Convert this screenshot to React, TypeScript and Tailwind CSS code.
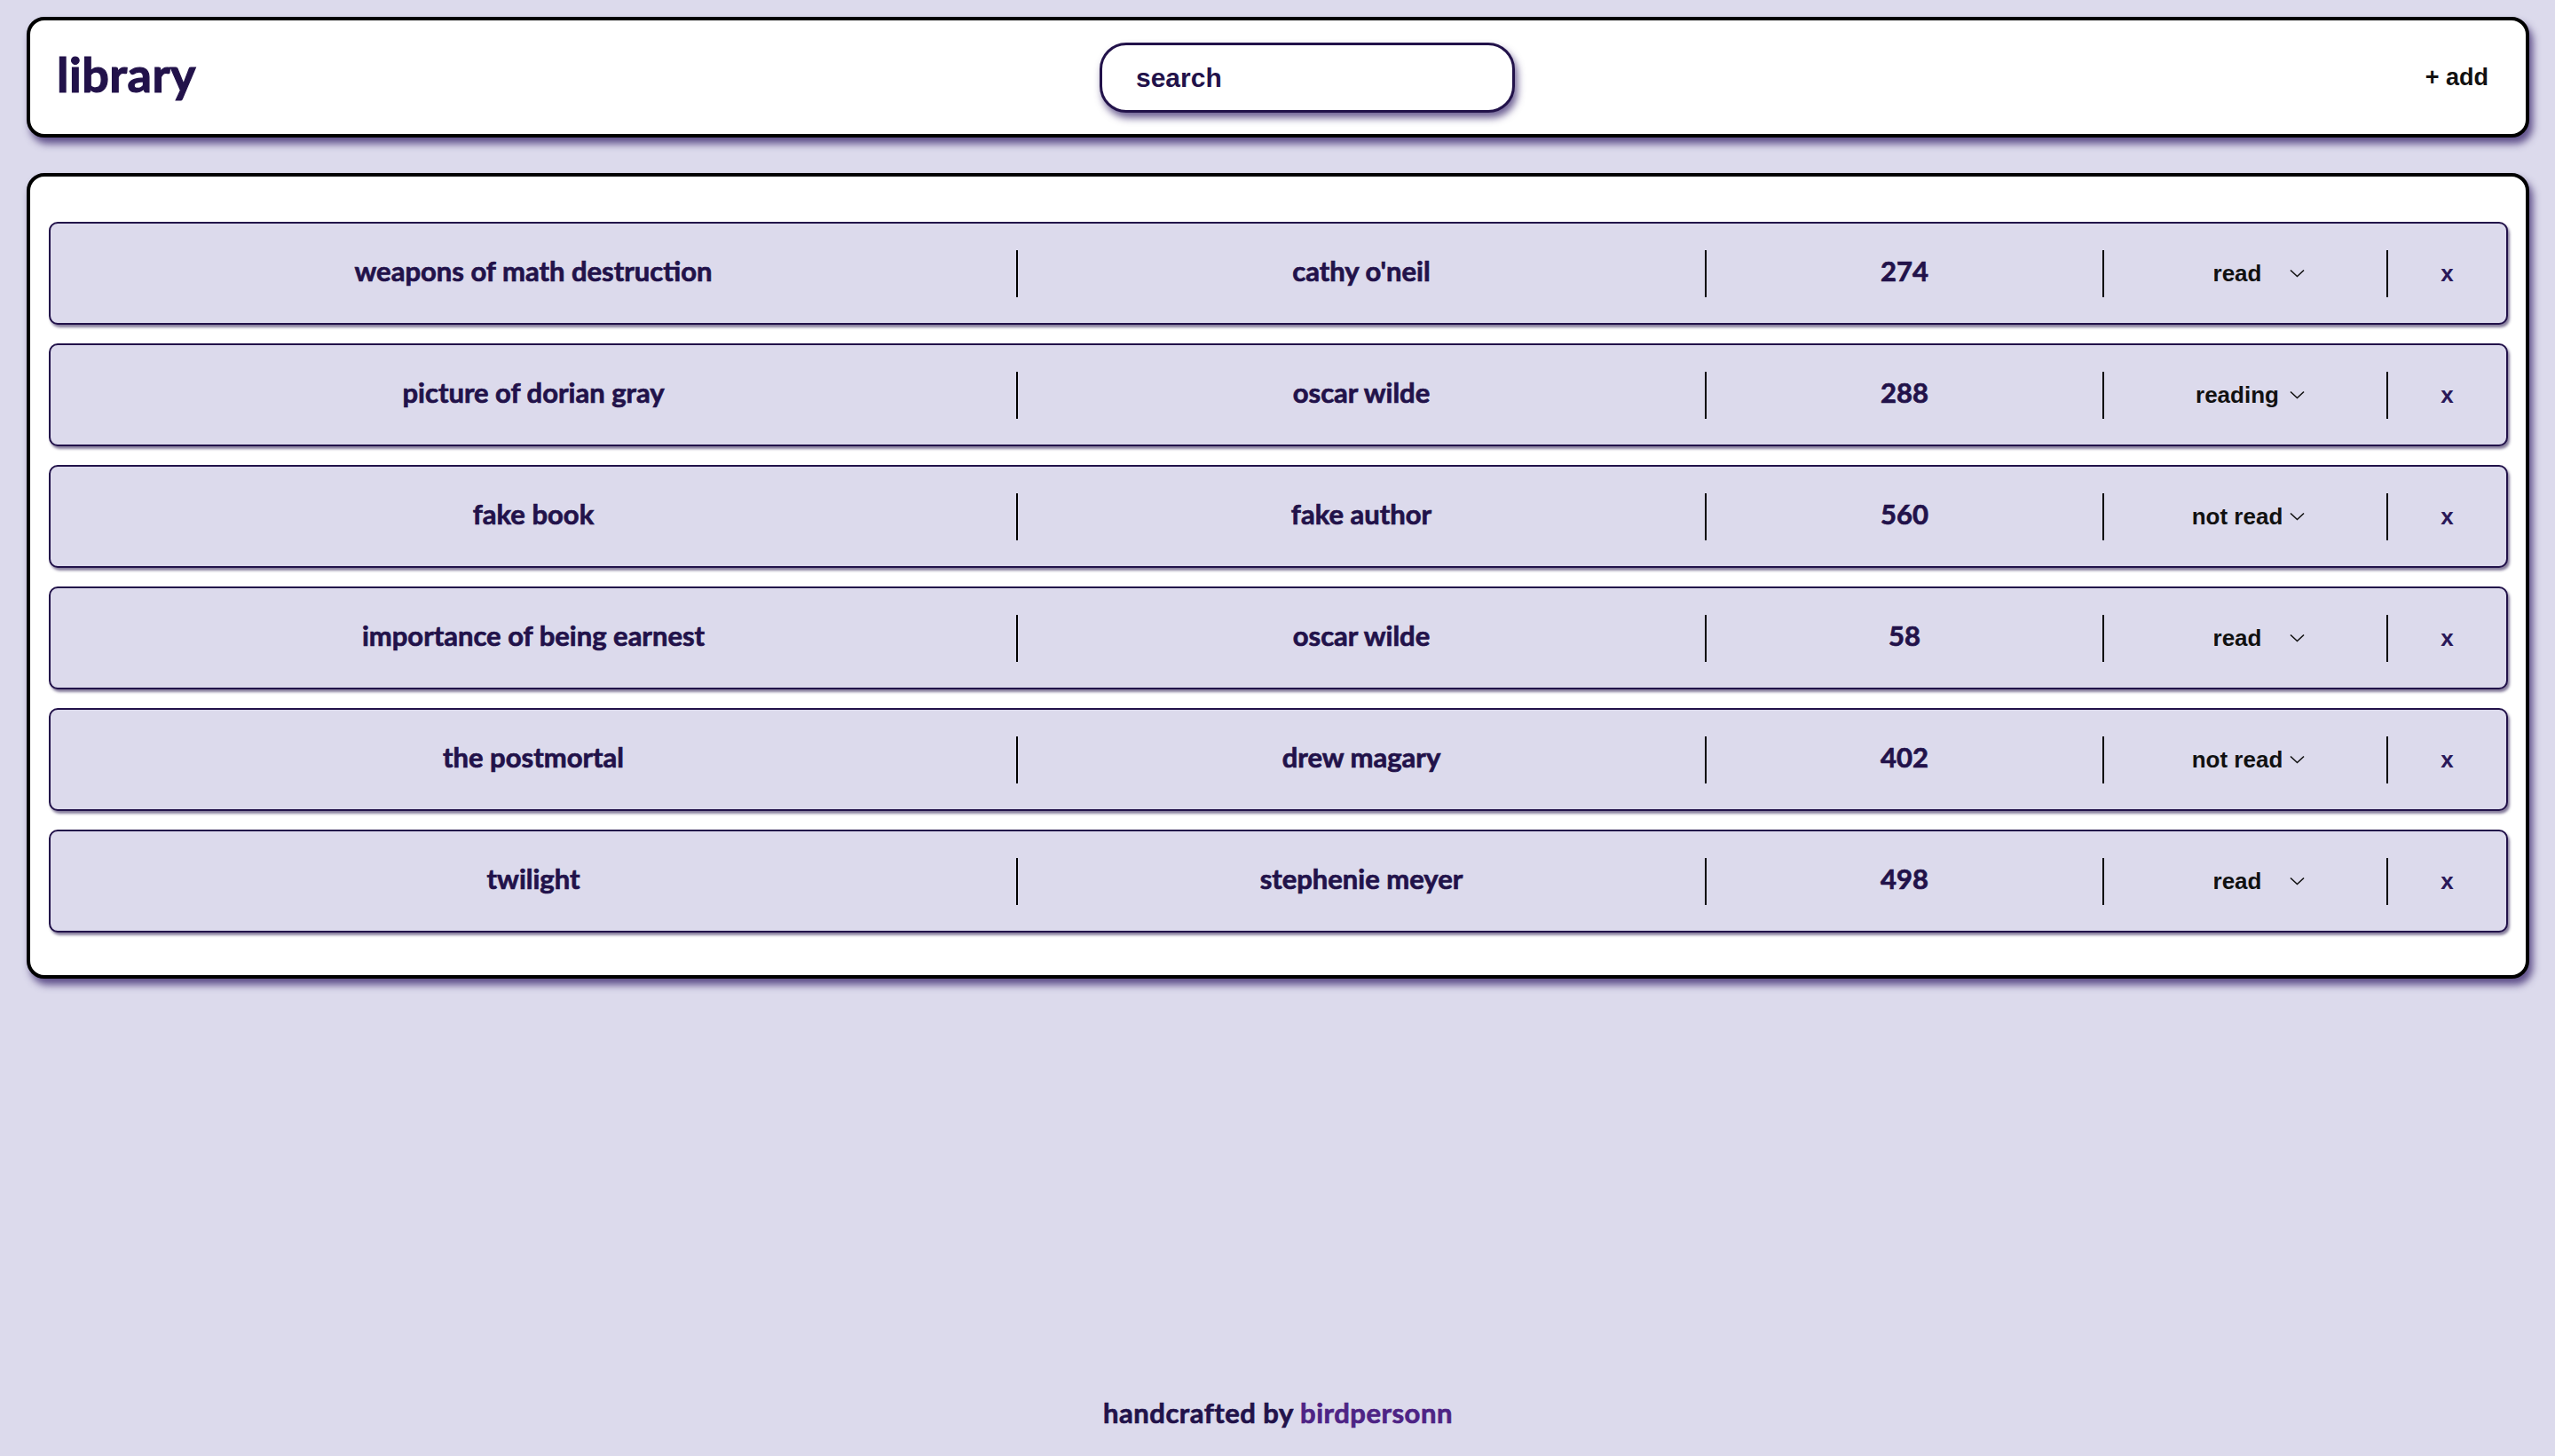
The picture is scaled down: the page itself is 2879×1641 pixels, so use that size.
import React from "react";

const books = [
  { title: "weapons of math destruction", author: "cathy o'neil", pages: "274", status: "read" },
  { title: "picture of dorian gray", author: "oscar wilde", pages: "288", status: "reading" },
  { title: "fake book", author: "fake author", pages: "560", status: "not read" },
  { title: "importance of being earnest", author: "oscar wilde", pages: "58", status: "read" },
  { title: "the postmortal", author: "drew magary", pages: "402", status: "not read" },
  { title: "twilight", author: "stephenie meyer", pages: "498", status: "read" },
];

const spartan = { fontFamily: "Lato, 'Noto Sans', sans-serif" };
const arial = { fontFamily: "'Liberation Sans', Arial, sans-serif" };

function Divider() {
  return <div className="w-[2px] h-[53px] bg-black shrink-0" />;
}

function Chevron() {
  return (
    <svg width="17" height="10" viewBox="0 0 17 10" className="shrink-0">
      <polyline points="1,1.5 8.5,8.5 16,1.5" fill="none" stroke="#111" strokeWidth="1.6" />
    </svg>
  );
}

const cellText =
  "shrink-0 text-center text-[31px] font-bold pb-[5px] [-webkit-text-stroke:0.7px_#22124a]";

export default function App() {
  return (
    <div className="min-h-[1641px] bg-[#dcdaec] flex flex-col pl-[30px] pr-[29px] pt-[19px] text-[#22124a]">
      <header className="h-[136px] bg-white border-[4px] border-black rounded-[20px] shadow-[4px_7px_9px_rgba(62,44,112,0.8)] flex items-center pl-[30px] pr-[42px]">
        <div className="flex-1 pb-[6px]">
          <h1
            className="text-[54px] font-bold leading-none text-[#22124a] tracking-[0.5px] [-webkit-text-stroke:1.2px_#22124a]"
            style={spartan}
          >
            library
          </h1>
        </div>
        <div className="w-[468px] h-[79px] ml-[78px] rounded-[30px] border-[3px] border-[#22124a] bg-white shadow-[3px_6px_8px_rgba(62,44,112,0.75)] flex items-center pl-[38px]">
          <input
            className="w-full bg-transparent outline-none text-[30px] font-bold text-[#22124a] placeholder:text-[#22124a]"
            style={arial}
            placeholder="search"
          />
        </div>
        <div className="flex-1 flex justify-end">
          <button className="text-[27px] font-bold text-[#111]" style={arial}>
            + add
          </button>
        </div>
      </header>

      <main className="mt-[40px] bg-white border-[4px] border-black rounded-[20px] shadow-[4px_7px_9px_rgba(62,44,112,0.8)] pt-[51px] pb-[48px] pl-[21px] pr-[20px] flex flex-col gap-[21px]">
        {books.map((b) => (
          <div
            key={b.title}
            className="h-[116px] bg-[#dcdaec] border-[2px] border-[#22124a] rounded-[10px] shadow-[2px_3px_3px_rgba(34,18,74,0.55)] flex items-center"
          >
            <div className={`w-[1088px] ${cellText}`} style={spartan}>
              {b.title}
            </div>
            <Divider />
            <div className={`w-[774px] ${cellText}`} style={spartan}>
              {b.author}
            </div>
            <Divider />
            <div className={`w-[446px] ${cellText}`} style={spartan}>
              {b.pages}
            </div>
            <Divider />
            <div className="w-[318px] shrink-0 flex justify-center items-center">
              <div className="flex items-center gap-[1px]">
                <span className="w-[116px] text-center text-[26px] font-bold text-[#111]" style={arial}>
                  {b.status}
                </span>
                <Chevron />
              </div>
            </div>
            <Divider />
            <div className="flex-1 text-center text-[26px] font-bold text-[#2a1858]" style={arial}>
              x
            </div>
          </div>
        ))}
      </main>

      <footer className="mt-auto h-[98px] flex items-center justify-center">
        <p
          className="text-[31px] font-bold text-[#22124a] tracking-[0.5px] [-webkit-text-stroke:0.7px_currentColor]"
          style={spartan}
        >
          handcrafted by <span className="text-[#4e2385]">birdpersonn</span>
        </p>
      </footer>
    </div>
  );
}
